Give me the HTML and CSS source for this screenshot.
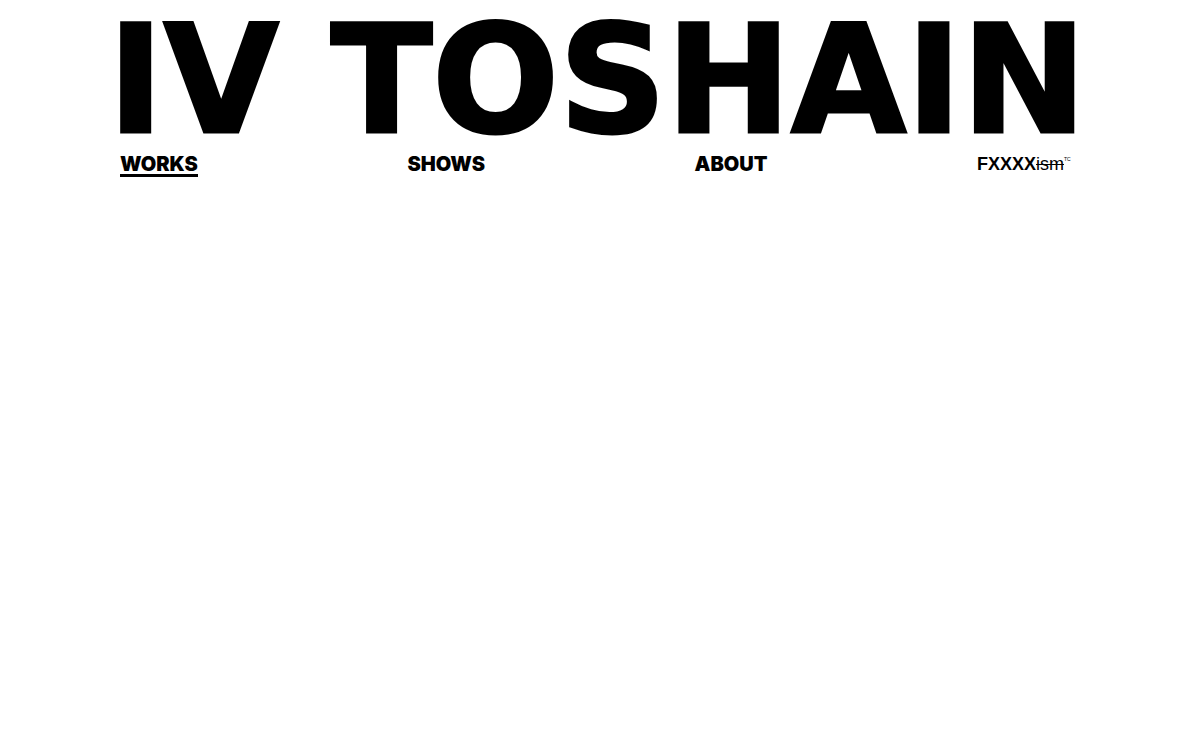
FILE: index.html
```html
<!DOCTYPE html>
<html lang="en">
<head>
<meta charset="utf-8">
<meta name="viewport" content="width=device-width, initial-scale=1">
<title>IV TOSHAIN</title>
<link rel="stylesheet" href="styles.css">
</head>
<body>
<header class="header">
<h1 class="title"><a href="#">IV TOSHAIN</a></h1>
<nav class="nav">
<a class="link active" href="#works">WORKS</a>
<a class="link" href="#shows">SHOWS</a>
<a class="link" href="#about">ABOUT</a>
<a class="brand" href="#fxxxxism"><b>FXXXX</b><s>ism</s><sup>TC</sup></a>
</nav>
</header>
</body>
</html>
```

FILE: styles.css
```css
body {
  margin: 0;
  background: #fff;
  color: #000;
  font-family: "Liberation Sans", Arial, sans-serif;
}

a {
  color: inherit;
  text-decoration: none;
}

.header {
  padding: 6px 10% 0;
}

.title {
  margin: 0 0 0 -12px;
  font-family: "DejaVu Sans", sans-serif;
  font-size: 149px;
  line-height: 149px;
  font-weight: 700;
  white-space: nowrap;
  -webkit-text-stroke: 3px #000;
}

.nav {
  display: flex;
  justify-content: space-between;
  align-items: flex-start;
}

.link {
  font-family: Inter, "Liberation Sans", sans-serif;
  font-size: 20px;
  line-height: 19px;
  font-weight: 900;
  border-bottom: 3px solid transparent;
}

.active {
  border-bottom-color: #000;
}

.brand {
  width: 103px;
  font-size: 18px;
  line-height: 18px;
}

.brand sup {
  font-size: 5px;
  line-height: 1;
  vertical-align: 9px;
}
```
